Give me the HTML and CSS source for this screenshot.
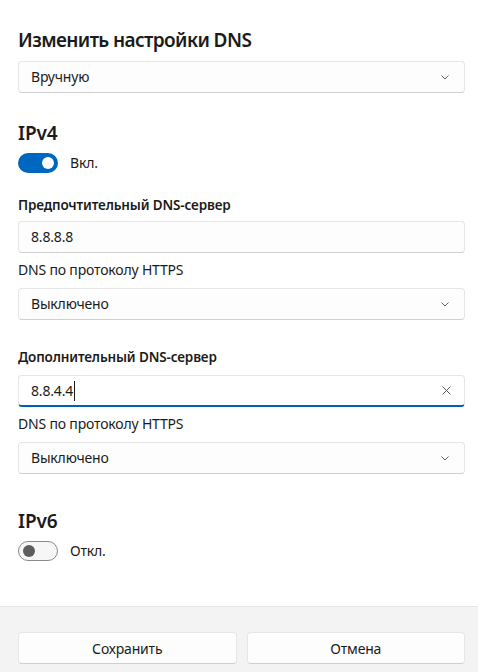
FILE: index.html
```html
<!DOCTYPE html>
<html lang="ru">
<head>
<meta charset="utf-8">
<link rel="stylesheet" href="styles.css">
</head>
<body>
<div class="dialog">
  <div class="content">
    <h1 class="title">Изменить настройки DNS</h1>
    <div class="select s-top"><span>Вручную</span><svg class="chev" viewBox="0 0 8 5" width="8" height="5"><path d="M0.5 0.5l3.5 3.5 3.5-3.5" fill="none" stroke="#606060" stroke-width="1"/></svg></div>

    <h2 class="section s-ipv4">IPv4</h2>
    <div class="toggle-row"><span class="toggle on"><span class="knob"></span></span><span class="tlabel">Вкл.</span></div>

    <div class="label bold l-pref">Предпочтительный DNS-сервер</div>
    <div class="input"><span>8.8.8.8</span></div>
    <div class="label l-doh">DNS по протоколу HTTPS</div>
    <div class="select"><span>Выключено</span><svg class="chev" viewBox="0 0 8 5" width="8" height="5"><path d="M0.5 0.5l3.5 3.5 3.5-3.5" fill="none" stroke="#606060" stroke-width="1"/></svg></div>

    <div class="label bold l-alt">Дополнительный DNS-сервер</div>
    <div class="input focus"><span>8.8.4.4</span><span class="caret"></span><svg class="clear" viewBox="0 0 9 9" width="9" height="9"><path d="M0.5 0.5l8 8M8.5 0.5l-8 8" fill="none" stroke="#5c5c5c" stroke-width="1"/></svg></div>
    <div class="label l-doh">DNS по протоколу HTTPS</div>
    <div class="select"><span>Выключено</span><svg class="chev" viewBox="0 0 8 5" width="8" height="5"><path d="M0.5 0.5l3.5 3.5 3.5-3.5" fill="none" stroke="#606060" stroke-width="1"/></svg></div>

    <h2 class="section s-ipv6">IPv6</h2>
    <div class="toggle-row"><span class="toggle off"><span class="knob"></span></span><span class="tlabel">Откл.</span></div>
  </div>
  <div class="footer">
    <button class="btn">Сохранить</button>
    <button class="btn">Отмена</button>
  </div>
</div>
</body>
</html>
```
FILE: styles.css
```css
* { box-sizing: border-box; }
html, body { margin: 0; padding: 0; background: #ffffff; }
body {
  font-family: "Noto Sans", "Open Sans", sans-serif;
  color: #1b1b1b;
  font-size: 14px;
  letter-spacing: -0.18px;
  width: 478px;
  height: 672px;
  overflow: hidden;
}
.dialog { display: flex; flex-direction: column; height: 672px; }
.content { flex: 1; padding: 26px 13px 0 18px; }
.title { margin: 0; font-size: 19px; line-height: 28px; font-weight: 600; letter-spacing: -0.6px; }
.section { margin: 0; font-size: 19px; line-height: 28px; font-weight: 600; letter-spacing: -0.1px; }
.s-ipv4 { margin-top: 26px; }
.s-ipv6 { margin-top: 33px; }
.select, .input {
  height: 32px;
  border: 1px solid #e6e6e6;
  border-bottom-color: #d0d0d0;
  border-radius: 4px;
  background: #fdfdfd;
  display: flex;
  align-items: center;
  padding: 0 11px 0 12px;
  line-height: 20px;
}
.select span, .input span { flex: 1; }
.select .chev { margin-right: 4px; }
.s-top { margin-top: 7px; }
.input.focus {
  border-bottom: 2px solid #005fb8;
  background: #ffffff;
}
.input.focus span:first-child { flex: 0 0 auto; }
.caret { display: block; flex: 1; height: 20px; position: relative; }
.caret::before { content: ""; position: absolute; left: 1px; top: 0; width: 1px; height: 20px; background: #1b1b1b; }
.clear { margin-right: 2px; }
.toggle-row { display: flex; align-items: center; margin-top: 6px; height: 20px; }
.toggle { width: 40px; height: 20px; border-radius: 10px; display: flex; align-items: center; }
.toggle.on { background: #0067c0; justify-content: flex-end; padding-right: 4px; }
.toggle.on .knob { width: 12px; height: 12px; border-radius: 50%; background: #fff; }
.toggle.off { border: 1px solid #8a8a8a; background: #f6f6f6; padding-left: 4px; }
.toggle.off .knob { width: 12px; height: 12px; border-radius: 50%; background: #5d5d5d; }
.tlabel { margin-left: 12px; line-height: 20px; }
.label { line-height: 20px; }
.label.bold { font-weight: 600; font-size: 13.5px; letter-spacing: -0.15px; }
.l-pref { margin-top: 22px; margin-bottom: 6px; }
.l-alt { margin-top: 27px; margin-bottom: 8px; }
.l-doh { margin-top: 7px; margin-bottom: 8px; }
.footer {
  height: 66px;
  background: #f3f3f3;
  border-top: 1px solid #e5e5e5;
  display: flex;
  gap: 10px;
  padding: 25px 13px 0 18px;
}
.btn {
  flex: 1;
  height: 32px;
  font-family: inherit;
  font-size: 14px;
  letter-spacing: -0.18px;
  color: #1b1b1b;
  background: #fdfdfd;
  border: 1px solid #e6e6e6;
  border-bottom-color: #cfcfcf;
  border-radius: 4px;
  padding: 0;
}
```
